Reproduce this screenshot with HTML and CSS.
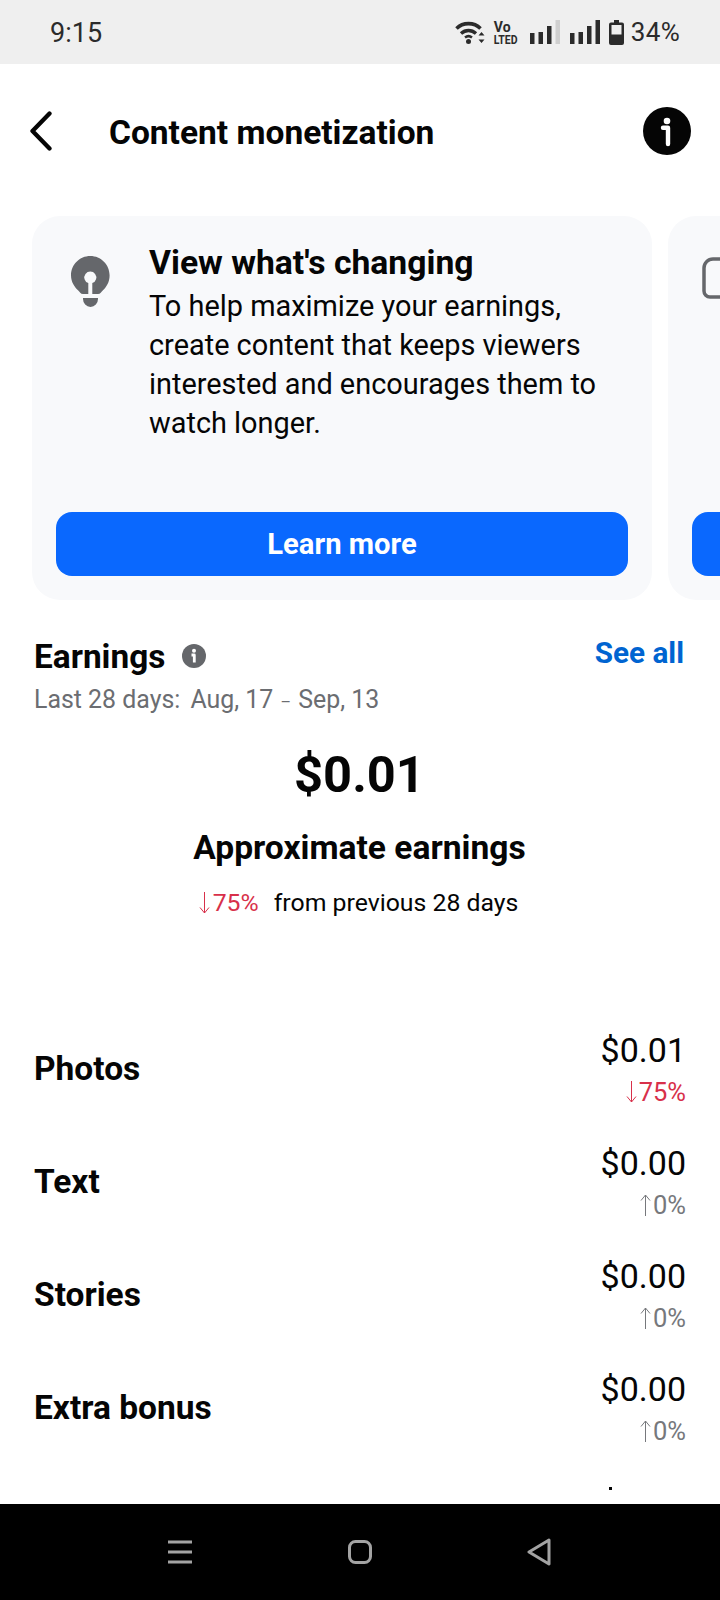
FILE: index.html
```html
<!DOCTYPE html>
<html lang="en">
<head>
<meta charset="utf-8">
<title>Content monetization</title>
<link rel="stylesheet" href="styles.css">
</head>
<body>
<div class="phone">
  <header class="status">
    <span class="time">9:15</span>
    <div class="status-icons">
      <svg class="wifi" viewBox="0 0 30 24" width="30" height="24"><path d="M1.500 8.500C8 2 19 2 25.500 8.500" fill="none" stroke="#2b2b2b" stroke-width="3.600"/><path d="M6 13.500c4.500-4 10.500-4 15 0" fill="none" stroke="#2b2b2b" stroke-width="3.400"/><path d="M10 17.500c2-1.500 5-1.500 7 0" fill="none" stroke="#2b2b2b" stroke-width="2.600"/><circle cx="13.500" cy="21.500" r="2.500" fill="#2b2b2b"/><path d="M26.500 12l3 3.500h-6zM26.500 23l-3-3.500h6z" fill="#2b2b2b"/></svg>
      <div class="volte"><span class="vo">Vo</span><span class="lte">LTED</span></div>
      <svg class="signal" viewBox="0 0 30 24" width="30" height="24"><rect x="0" y="13" width="4.500" height="11" fill="#2b2b2b"/><rect x="8.500" y="12" width="4.500" height="12" fill="#2b2b2b"/><rect x="17" y="6" width="4.500" height="18" fill="#2b2b2b"/><rect x="25.500" y="0" width="4.500" height="24" fill="#cfcfcf"/></svg>
      <svg class="signal" viewBox="0 0 30 24" width="30" height="24"><rect x="0" y="13" width="4.500" height="11" fill="#2b2b2b"/><rect x="8.500" y="12" width="4.500" height="12" fill="#2b2b2b"/><rect x="17" y="6" width="4.500" height="18" fill="#2b2b2b"/><rect x="25.500" y="0" width="4.500" height="24" fill="#2b2b2b"/></svg>
      <svg class="battery" viewBox="0 0 15 25" width="15" height="25"><path d="M5 0h5v2.500h3a2 2 0 0 1 2 2V23a2 2 0 0 1-2 2H2a2 2 0 0 1-2-2V4.500a2 2 0 0 1 2-2h3z" fill="#2b2b2b"/><rect x="2.500" y="5" width="10" height="9.500" fill="#efefef"/></svg>
      <span class="pct-batt">34%</span>
    </div>
  </header>

  <main class="screen">
    <div class="topbar">
      <svg class="back" viewBox="0 0 24 40" width="24" height="40"><path d="M20.500 2.500 3.500 20 20.500 37.500" fill="none" stroke="#050505" stroke-width="4.300" stroke-linecap="round" stroke-linejoin="round"/></svg>
      <h1 class="page-title">Content monetization</h1>
      <svg class="info-big" viewBox="0 0 48 48" width="48" height="48"><circle cx="24" cy="24" r="24" fill="#050505"/><circle cx="24" cy="14" r="3.300" fill="#fff"/><path d="M20 20.800h5V37" fill="none" stroke="#fff" stroke-width="4.400" stroke-linecap="round" stroke-linejoin="round"/></svg>
    </div>

    <div class="carousel">
      <section class="card">
        <div class="card-body">
          <svg class="bulb" viewBox="0 0 40 52" width="40" height="52"><path d="M19.300 0C8.600 0 0 8.600 0 19.300c0 7 3.500 11.500 7 15 1.800 1.800 2.500 3.700 5 3.700h5.300V27.100a6 6 0 1 1 4 0V38H27c2.500 0 3.200-1.900 5-3.700 3.500-3.500 6.600-8 6.600-15C38.600 8.600 30 0 19.300 0z" fill="#65676b"/><path d="M12 42h15v1a8 8 0 0 1-7.500 8 8 8 0 0 1-7.500-8z" fill="#65676b"/></svg>
          <div class="card-copy">
            <h2 class="card-title">View what's changing</h2>
            <p class="card-text">To help maximize your earnings, create content that keeps viewers interested and encourages them to watch longer.</p>
          </div>
        </div>
        <button class="cta">Learn more</button>
      </section>
      <section class="card">
        <div class="card-body">
          <svg class="chat" viewBox="0 0 40 48" width="40" height="48"><path d="M11 2h23a9 9 0 0 1 9 9v20a9 9 0 0 1-9 9H8a6 6 0 0 1-6-6V11a9 9 0 0 1 9-9z" fill="none" stroke="#65676b" stroke-width="3.500"/></svg>
        </div>
        <button class="cta">&nbsp;</button>
      </section>
    </div>

    <section class="earnings">
      <div class="earn-head">
        <div class="earn-title">
          <h2>Earnings</h2>
          <svg class="info-small" viewBox="0 0 24 24" width="24" height="24"><circle cx="12" cy="12" r="12" fill="#65676b"/><circle cx="12" cy="6.800" r="2" fill="#fff"/><path d="M9.500 11h2.800v7.500" fill="none" stroke="#fff" stroke-width="2.800" stroke-linejoin="round"/></svg>
        </div>
        <a class="see-all">See all</a>
      </div>
      <p class="range"><span class="range-lead">Last 28 days:</span> Aug, 17 <span class="dash">–</span> Sep, 13</p>
      <div class="total">$0.01</div>
      <div class="total-label">Approximate earnings</div>
      <p class="compare">
        <span class="down"><svg class="arrow" viewBox="0 0 11 22" width="11" height="22"><path d="M5.500 0v21M1 15.500 5.500 21 10 15.500" fill="none" stroke="currentColor" stroke-width="1"/></svg>75%</span>
        <span class="compare-text">from previous 28 days</span>
      </p>

      <div class="rows">
        <div class="row">
          <span class="row-label">Photos</span>
          <div class="row-values">
            <span class="amount">$0.01</span>
            <span class="delta down"><svg class="arrow" viewBox="0 0 11 22" width="11" height="22"><path d="M5.500 0v21M1 15.500 5.500 21 10 15.500" fill="none" stroke="currentColor" stroke-width="1"/></svg>75%</span>
          </div>
        </div>
        <div class="row">
          <span class="row-label">Text</span>
          <div class="row-values">
            <span class="amount">$0.00</span>
            <span class="delta flat"><svg class="arrow" viewBox="0 0 11 22" width="11" height="22"><path d="M5.500 22V1M1 6.500 5.500 1 10 6.500" fill="none" stroke="currentColor" stroke-width="1"/></svg>0%</span>
          </div>
        </div>
        <div class="row">
          <span class="row-label">Stories</span>
          <div class="row-values">
            <span class="amount">$0.00</span>
            <span class="delta flat"><svg class="arrow" viewBox="0 0 11 22" width="11" height="22"><path d="M5.500 22V1M1 6.500 5.500 1 10 6.500" fill="none" stroke="currentColor" stroke-width="1"/></svg>0%</span>
          </div>
        </div>
        <div class="row">
          <span class="row-label">Extra bonus</span>
          <div class="row-values">
            <span class="amount">$0.00</span>
            <span class="delta flat"><svg class="arrow" viewBox="0 0 11 22" width="11" height="22"><path d="M5.500 22V1M1 6.500 5.500 1 10 6.500" fill="none" stroke="currentColor" stroke-width="1"/></svg>0%</span>
          </div>
        </div>
      </div>
      <div class="speck"></div>
    </section>
  </main>

  <nav class="navbar">
    <svg viewBox="0 0 24 24" width="24" height="24"><path d="M0 2h24M0 12h24M0 22h24" stroke="#a3a3a3" stroke-width="3"/></svg>
    <svg viewBox="0 0 24 24" width="24" height="24"><rect x="1.500" y="1.500" width="21" height="21" rx="6" fill="none" stroke="#a3a3a3" stroke-width="3"/></svg>
    <svg viewBox="0 0 24 28" width="24" height="28"><path d="M22 2 2 14l20 12z" fill="none" stroke="#a3a3a3" stroke-width="3" stroke-linejoin="round"/></svg>
  </nav>
</div>
</body>
</html>
```

FILE: styles.css
```css
* { box-sizing: border-box; }
html, body { margin: 0; padding: 0; }
body { background: #fff; font-family: Roboto, "Liberation Sans", sans-serif; color: #050505; }
h1, h2, p { margin: 0; }

.phone { width: 720px; height: 1600px; display: flex; flex-direction: column; overflow: hidden; }

.status { height: 64px; flex: none; background: #efefef; display: flex; align-items: center; justify-content: space-between; padding: 0 40px 0 50px; color: #2b2b2b; }
.time { font-size: 27px; padding-top: 2px; }
.status-icons { display: flex; align-items: center; }
.wifi { margin-right: 9px; }
.volte { width: 27px; display: flex; flex-direction: column; font-weight: 700; margin-right: 9px; }
.vo { font-size: 14px; line-height: 12px; }
.lte { display: block; font-size: 10.500px; line-height: 11px; transform: scaleY(1.2); transform-origin: left top; }
.signal { margin-right: 10px; }
.battery { margin-left: -1px; }
.pct-batt { font-size: 26px; margin-left: 7px; letter-spacing: .3px; }

.screen { flex: 1; min-height: 0; overflow: hidden; }

.topbar { height: 134px; display: flex; align-items: center; padding: 0 29px; }
.back { flex: none; margin-right: 56px; }
.page-title { flex: 1; font-size: 33.500px; font-weight: 700; line-height: 40px; padding-top: 4px; }

.carousel { margin-top: 18px; padding-left: 32px; display: flex; gap: 16px; height: 384px; width: 1400px; }
.card { width: 620px; height: 384px; background: #f8f9fb; border-radius: 28px; padding: 24px; display: flex; flex-direction: column; justify-content: space-between; }
.card-body { display: flex; }
.bulb { flex: none; margin: 16px 0 0 15px; }
.chat { flex: none; margin: 17px 0 0 10px; }
.card-copy { margin-left: 38px; }
.card-title { font-size: 33.700px; font-weight: 700; line-height: 46px; }
.card-text { font-size: 28.900px; line-height: 39px; padding-top: 1px; }
.cta { display: block; width: 572px; height: 64px; border: 0; border-radius: 16px; background: #0a68fe; color: #fff; font: 700 29.200px/64px Roboto, "Liberation Sans", sans-serif; padding: 0; }

.earnings { padding: 36px 37px 0 34px; }
.earn-head { display: flex; justify-content: space-between; align-items: flex-start; }
.earn-title { display: flex; align-items: center; gap: 17px; height: 40px; }
.earn-title h2 { font-size: 33.400px; font-weight: 700; line-height: 40px; padding-top: 1px; }
.see-all { font-size: 29.700px; font-weight: 700; line-height: 34px; color: #0064d1; margin-right: -1px; }
.range { margin-top: 8px; font-size: 24.900px; line-height: 32px; color: #6b6d71; }
.range-lead { margin-right: 4px; }
.dash { font-size: 16px; margin: 0 1px; }
.total { margin-top: 26px; text-align: center; font-size: 50.600px; font-weight: 700; line-height: 60px; padding-left: 2px; }
.total-label { margin-top: 23px; text-align: center; font-size: 33.600px; font-weight: 700; line-height: 40px; padding-left: 2px; }
.compare { margin-top: 19px; display: flex; justify-content: center; gap: 15px; font-size: 24.800px; line-height: 32px; }
.down { color: #d8304a; display: inline-flex; align-items: center; }
.flat { color: #76787c; }
.arrow { flex: none; margin-right: 3px; }

.rows { margin-top: 110px; display: flex; flex-direction: column; gap: 35px; }
.row { height: 78px; display: flex; justify-content: space-between; align-items: center; }
.row-label { font-size: 33.500px; font-weight: 700; line-height: 40px; padding-top: 2px; }
.row-values { display: flex; flex-direction: column; align-items: flex-end; gap: 6px; }
.amount { font-size: 34px; line-height: 42px; margin-right: -3px; }
.delta { font-size: 25.500px; line-height: 30px; display: inline-flex; align-items: center; margin-right: -3px; }
.delta .arrow { margin-right: 2px; }
.speck { width: 3px; height: 3px; background: #050505; margin: 41px 0 0 575px; }

.navbar { height: 96px; flex: none; background: #000; display: flex; align-items: center; justify-content: space-between; padding: 0 169px 0 168px; }
```
